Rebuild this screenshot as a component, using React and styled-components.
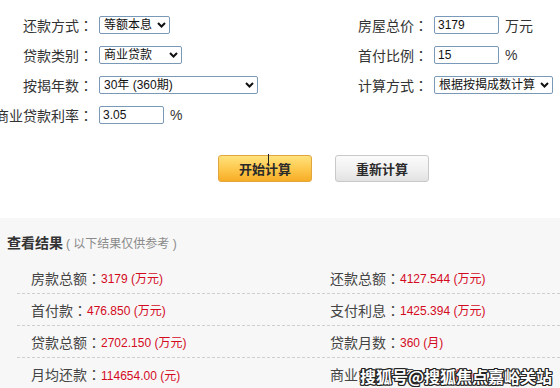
import React from "react";
import styled, { createGlobalStyle } from "styled-components";

const Global = createGlobalStyle`
  html, body { margin: 0; padding: 0; background: #fff; }
  body {
    font-family: "Liberation Sans", "Noto Sans CJK SC", sans-serif;
    color: #333;
    width: 560px;
    height: 388px;
    overflow: hidden;
  }
`;

const Page = styled.div`
  width: 560px;
  height: 388px;
  display: flex;
  flex-direction: column;
  position: relative;
  overflow: hidden;
`;

const Form = styled.div`
  display: flex;
  padding-top: 10px;
`;

const Column = styled.div`
  width: ${(p) => p.$width}px;
  flex: none;
  display: grid;
  grid-template-columns: ${(p) => p.$label}px auto;
  grid-auto-rows: 30px;
  column-gap: 6px;
  align-items: center;
`;

const Label = styled.div`
  display: flex;
  justify-content: flex-end;
  white-space: nowrap;
  font-size: 14px;
  color: #333;
`;

const Colon = styled.span`
  font-family: "Noto Sans CJK TC", "Noto Sans CJK SC", sans-serif;
`;

const Field = styled.div`
  display: flex;
  align-items: center;
  gap: 6px;
  font-size: 14px;
  color: #333;
`;

const SelectBox = styled.div`
  position: relative;
  width: ${(p) => p.$w}px;
  height: 18px;
  box-sizing: border-box;
`;

const NativeSelect = styled.select`
  appearance: none;
  -webkit-appearance: none;
  width: 100%;
  height: 18px;
  box-sizing: border-box;
  border: 1px solid #7a98b8;
  border-radius: 2px;
  background: #fff;
  font-family: "Liberation Sans", "Noto Sans CJK SC", sans-serif;
  font-size: 12px;
  color: #111;
  padding: 0 0 0 4px;
  margin: 0;
  outline: none;
  line-height: 16px;
`;

const Chevron = styled.svg`
  position: absolute;
  right: 4px;
  top: 6px;
  pointer-events: none;
`;

const TextInput = styled.input`
  width: ${(p) => p.$w}px;
  height: 18px;
  box-sizing: border-box;
  border: 1px solid #7a98b8;
  border-radius: 2px;
  padding: 0 0 0 3px;
  margin: 0;
  font-family: "Liberation Sans", "Noto Sans CJK SC", sans-serif;
  font-size: 12px;
  color: #111;
  outline: none;
`;

const Unit = styled.span`
  font-size: 14px;
  color: #333;
`;

const ButtonRow = styled.div`
  display: flex;
  gap: 23px;
  margin-top: 25px;
  padding-left: 218px;
`;

const Button = styled.button`
  position: relative;
  width: 94px;
  height: 27px;
  box-sizing: border-box;
  border-radius: 3px;
  border: 1px solid ${(p) => (p.$primary ? "#e2a640" : "#c9c9c9")};
  background: ${(p) =>
    p.$primary
      ? "linear-gradient(#ffe27c, #fdc64a 55%, #f7ad26)"
      : "linear-gradient(#fbfbfb, #f0f0f0 55%, #e2e2e2)"};
  font-family: "Noto Sans CJK SC", sans-serif;
  font-weight: 700;
  font-size: 13px;
  color: #2a2a2a;
  padding: 0;
  margin: 0;
  cursor: pointer;
`;

const Caret = styled.span`
  position: absolute;
  left: 49px;
  top: -2px;
  width: 1px;
  height: 11px;
  background: #222;
`;

const Result = styled.div`
  margin-top: 36px;
  flex: 1;
  background: #f7f7f7;
  position: relative;
`;

const ResultHead = styled.div`
  height: 44px;
  box-sizing: border-box;
  padding: 4px 0 0 7px;
  display: flex;
  align-items: center;
  gap: 3px;
`;

const HeadTitle = styled.span`
  font-family: "Noto Sans CJK SC", sans-serif;
  font-weight: 700;
  font-size: 14px;
  color: #333;
`;

const HeadNote = styled.span`
  font-size: 12px;
  color: #8a8a8a;
`;

const Rows = styled.div`
  margin-left: 17px;
`;

const Row = styled.div`
  display: grid;
  grid-template-columns: 299px 1fr;
  height: 32px;
  box-sizing: border-box;
  align-items: center;
  border-bottom: ${(p) => (p.$last ? "none" : "1px dashed #cfcfcf")};
`;

const Cell = styled.div`
  padding-left: 14px;
  white-space: nowrap;
  display: flex;
  align-items: center;
`;

const CellLabel = styled.span`
  font-size: 14px;
  color: #444;
`;

const Value = styled.span`
  font-size: 12px;
  color: #d40a1e;
`;

const Watermark = styled.div`
  position: absolute;
  right: 8px;
  bottom: 5px;
  font-family: "Noto Sans CJK SC", sans-serif;
  font-weight: 700;
  font-size: 16px;
  line-height: 18px;
  color: #fff;
  white-space: nowrap;
  text-shadow: 1px 1px 0 #222, -1px -1px 0 #222, 1px -1px 0 #222,
    -1px 1px 0 #222, 0 1px 0 #222, 1px 0 0 #222, 0 -1px 0 #222, -1px 0 0 #222;
`;

const ChevronIcon = () => (
  <Chevron width="9" height="6" viewBox="0 0 9 6">
    <path d="M1 1 L4.5 4.5 L8 1" fill="none" stroke="#111" strokeWidth="2" />
  </Chevron>
);

const Select = ({ w, value }) => (
  <SelectBox $w={w}>
    <NativeSelect defaultValue={value}>
      <option value={value}>{value}</option>
    </NativeSelect>
    <ChevronIcon />
  </SelectBox>
);

const results = [
  [
    ["房款总额", "3179 (万元)"],
    ["还款总额", "4127.544 (万元)"],
  ],
  [
    ["首付款", "476.850 (万元)"],
    ["支付利息", "1425.394 (万元)"],
  ],
  [
    ["贷款总额", "2702.150 (万元)"],
    ["贷款月数", "360 (月)"],
  ],
  [
    ["月均还款", "114654.00 (元)"],
    ["商业贷款利率", "3.05 (%)"],
  ],
];

const FormLabel = ({ children }) => (
  <Label>
    {children}
    <Colon>：</Colon>
  </Label>
);

export default function App() {
  return (
    <>
      <Global />
      <Page>
        <Form>
          <Column $width={358} $label={93}>
            <FormLabel>还款方式</FormLabel>
            <Field>
              <Select w={71} value="等额本息" />
            </Field>
            <FormLabel>贷款类别</FormLabel>
            <Field>
              <Select w={83} value="商业贷款" />
            </Field>
            <FormLabel>按揭年数</FormLabel>
            <Field>
              <Select w={159} value="30年 (360期)" />
            </Field>
            <FormLabel>商业贷款利率</FormLabel>
            <Field>
              <TextInput $w={65} defaultValue="3.05" />
              <Unit>%</Unit>
            </Field>
          </Column>
          <Column $width={202} $label={70}>
            <FormLabel>房屋总价</FormLabel>
            <Field>
              <TextInput $w={65} defaultValue="3179" />
              <Unit>万元</Unit>
            </Field>
            <FormLabel>首付比例</FormLabel>
            <Field>
              <TextInput $w={65} defaultValue="15" />
              <Unit>%</Unit>
            </Field>
            <FormLabel>计算方式</FormLabel>
            <Field>
              <Select w={119} value="根据按揭成数计算" />
            </Field>
          </Column>
        </Form>

        <ButtonRow>
          <Button $primary>
            开始计算
            <Caret />
          </Button>
          <Button>重新计算</Button>
        </ButtonRow>

        <Result>
          <ResultHead>
            <HeadTitle>查看结果</HeadTitle>
            <HeadNote>( 以下结果仅供参考 )</HeadNote>
          </ResultHead>
          <Rows>
            {results.map((row, i) => (
              <Row key={i} $last={i === results.length - 1}>
                {row.map(([label, value]) => (
                  <Cell key={label}>
                    <CellLabel>
                      {label}
                      <Colon>：</Colon>
                    </CellLabel>
                    <Value>{value}</Value>
                  </Cell>
                ))}
              </Row>
            ))}
          </Rows>
          <Watermark>搜狐号@搜狐焦点嘉峪关站</Watermark>
        </Result>
      </Page>
    </>
  );
}
